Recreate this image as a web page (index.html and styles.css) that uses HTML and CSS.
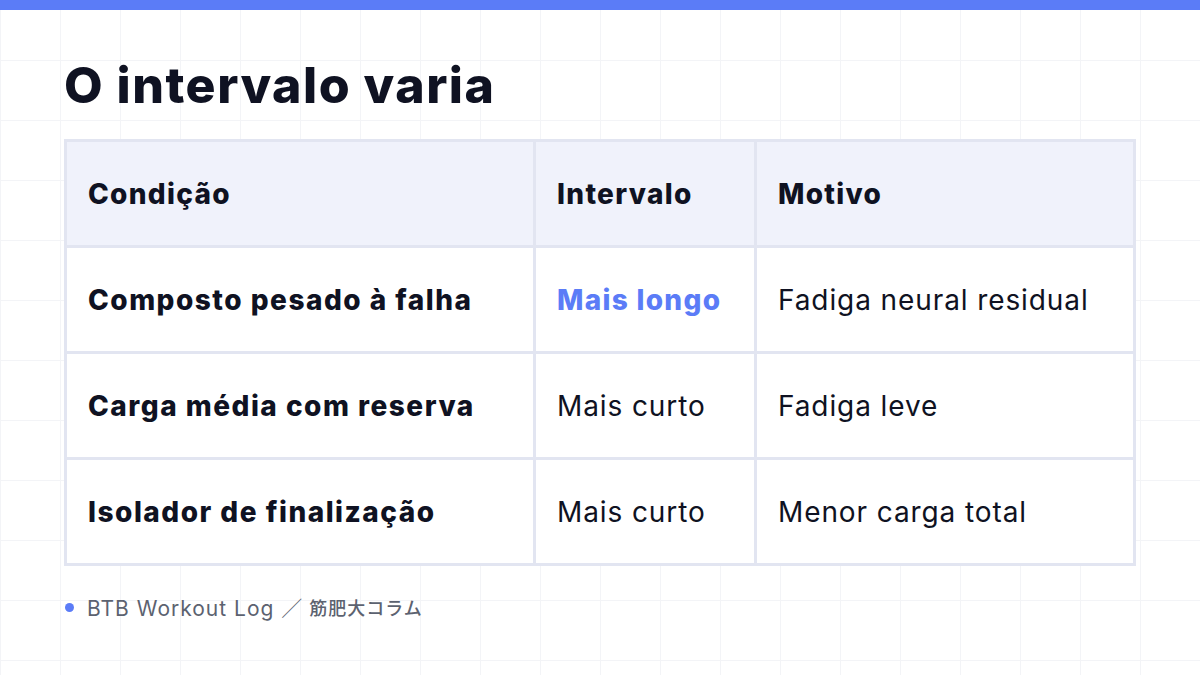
FILE: index.html
```html
<!DOCTYPE html>
<html lang="pt">
  <head>
    <meta charset="UTF-8" />
    <meta name="viewport" content="width=device-width, initial-scale=1.0" />
    <title>O intervalo varia</title>
    <link rel="stylesheet" href="styles.css">
  </head>
  <body>
    <div class="top-bar"></div>
    <div class="slide">
      <h1>O intervalo varia</h1>
      <table class="rest-table">
        <thead>
          <tr>
            <th class="col-cond">Condição</th>
            <th class="col-int">Intervalo</th>
            <th>Motivo</th>
          </tr>
        </thead>
        <tbody>
          <tr>
            <td class="cond">Composto pesado à falha</td>
            <td class="highlight">Mais longo</td>
            <td>Fadiga neural residual</td>
          </tr>
          <tr>
            <td class="cond">Carga média com reserva</td>
            <td>Mais curto</td>
            <td>Fadiga leve</td>
          </tr>
          <tr>
            <td class="cond">Isolador de finalização</td>
            <td>Mais curto</td>
            <td>Menor carga total</td>
          </tr>
        </tbody>
      </table>
      <p class="source"><span class="dot"></span>BTB Workout Log ／ <span class="jp">筋肥大コラム</span></p>
    </div>
  </body>
</html>
```

FILE: styles.css
```css
html,
body {
  height: 100%;
}

body {
  margin: 0;
  font-family: "Inter", "Noto Sans", "Noto Sans CJK JP", sans-serif;
  color: #0f1222;
  background-color: #fff;
  background-image:
    linear-gradient(to right, #f3f4f7 1px, transparent 1px),
    linear-gradient(to bottom, #f3f4f7 1px, transparent 1px);
  background-size: 60px 60px;
  overflow: hidden;
}

.top-bar {
  height: 10px;
  background-color: #5b7cf7;
}

.slide {
  padding: 0 64px;
}

h1 {
  margin: 45px 0 24px;
  font-size: 50px;
  line-height: 60px;
  font-weight: 800;
  letter-spacing: 1.5px;
  color: #0f1222;
}

.rest-table {
  width: 1072px;
  border-collapse: collapse;
  border: 3px solid #e2e5f1;
  background-color: #fff;
}

.rest-table th,
.rest-table td {
  height: 103px;
  padding: 0 21px;
  border: 3px solid #e2e5f1;
  text-align: left;
  font-size: 28px;
  letter-spacing: 0.9px;
  color: #0f1222;
}

.rest-table th {
  background-color: #f0f2fb;
  font-weight: 800;
  letter-spacing: 1.3px;
}

.rest-table td {
  font-weight: 400;
}

.col-cond {
  width: 424px;
}

.col-int {
  width: 176px;
}

.rest-table td.cond {
  font-weight: 800;
  letter-spacing: 1.5px;
}

.rest-table td.highlight {
  color: #5b7cf7;
  font-weight: 800;
  letter-spacing: 1.3px;
}

.source {
  display: flex;
  align-items: center;
  margin: 26px 0 0;
  font-family: "Inter", "Noto Sans CJK JP", sans-serif;
  font-size: 21px;
  letter-spacing: 1px;
  color: #5c6270;
}

.source .jp {
  margin-left: 6px;
  font-family: "Noto Sans CJK JP", sans-serif;
  font-size: 18px;
  font-weight: 500;
  letter-spacing: 1px;
}

.dot {
  width: 9px;
  height: 9px;
  margin: 0 13px 0 1px;
  border-radius: 50%;
  background-color: #5b7cf7;
}
```
